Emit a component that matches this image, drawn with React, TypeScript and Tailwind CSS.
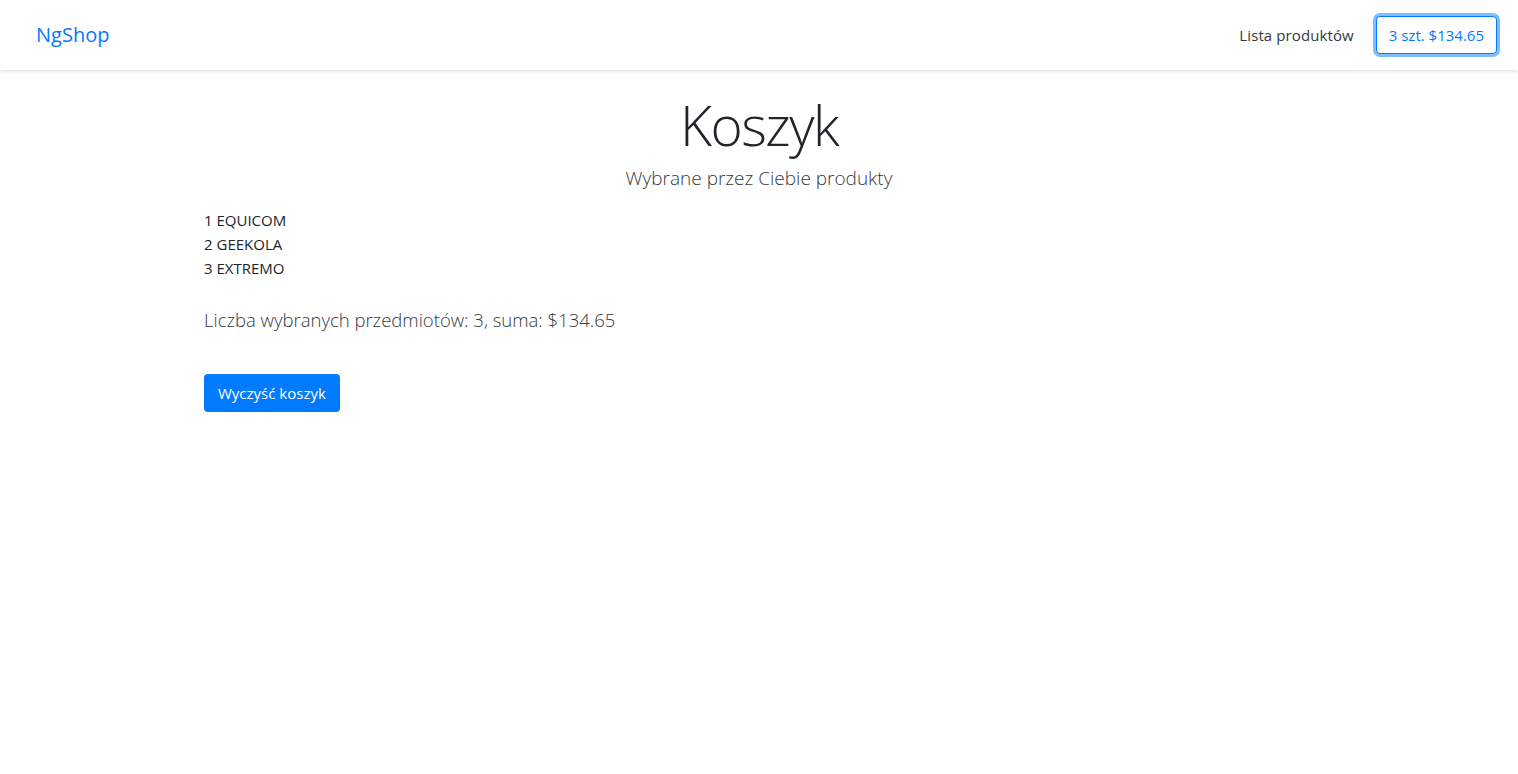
// App.tsx

export default function App() {
  return (
    <div className="min-h-screen bg-white text-[#212529] font-['Open_Sans','Noto_Sans',sans-serif]">

      {/* Navbar */}
      <nav className="h-[70px] flex items-center justify-between pl-9 pr-[21px] bg-white shadow-[0_1px_4px_rgba(0,0,0,0.15)]">
        <a className="text-[20px] text-[#007bff] leading-none">NgShop</a>
        <div className="flex items-center gap-[22px]">
          <a className="text-[15px] text-[#343a40] tracking-[0.1px]">Lista produktów</a>
          <button className="h-[38px] px-3 text-[15px] text-[#007bff] bg-white border border-[#007bff] rounded-[4px] shadow-[0_0_0_3px_rgba(0,123,255,0.5)]">
            3 szt. $134.65
          </button>
        </div>
      </nav>

      <div className="max-w-[1110px] mx-auto">

        {/* Header */}
        <div className="text-center pt-[21px]">
          <h1 className="text-[55px] font-light leading-[67px] tracking-[-1.5px]">Koszyk</h1>
          <p className="text-[19px] font-light leading-[30px] mt-[5px] text-[#343a40]">Wybrane przez Ciebie produkty</p>
        </div>

        {/* Items */}
        <ul className="mt-[15px] text-[15px] leading-[24px]">
          <li>1 EQUICOM</li>
          <li>2 GEEKOLA</li>
          <li>3 EXTREMO</li>
        </ul>

        <p className="mt-[25px] text-[18.5px] font-light leading-[30px] text-[#343a40]">
          Liczba wybranych przedmiotów: 3, suma: $134.65
        </p>

        <button className="mt-[39px] h-[38px] px-[14px] text-[15px] text-white bg-[#007bff] rounded-[4px]">
          Wyczyść koszyk
        </button>

      </div>
    </div>
  )
}
